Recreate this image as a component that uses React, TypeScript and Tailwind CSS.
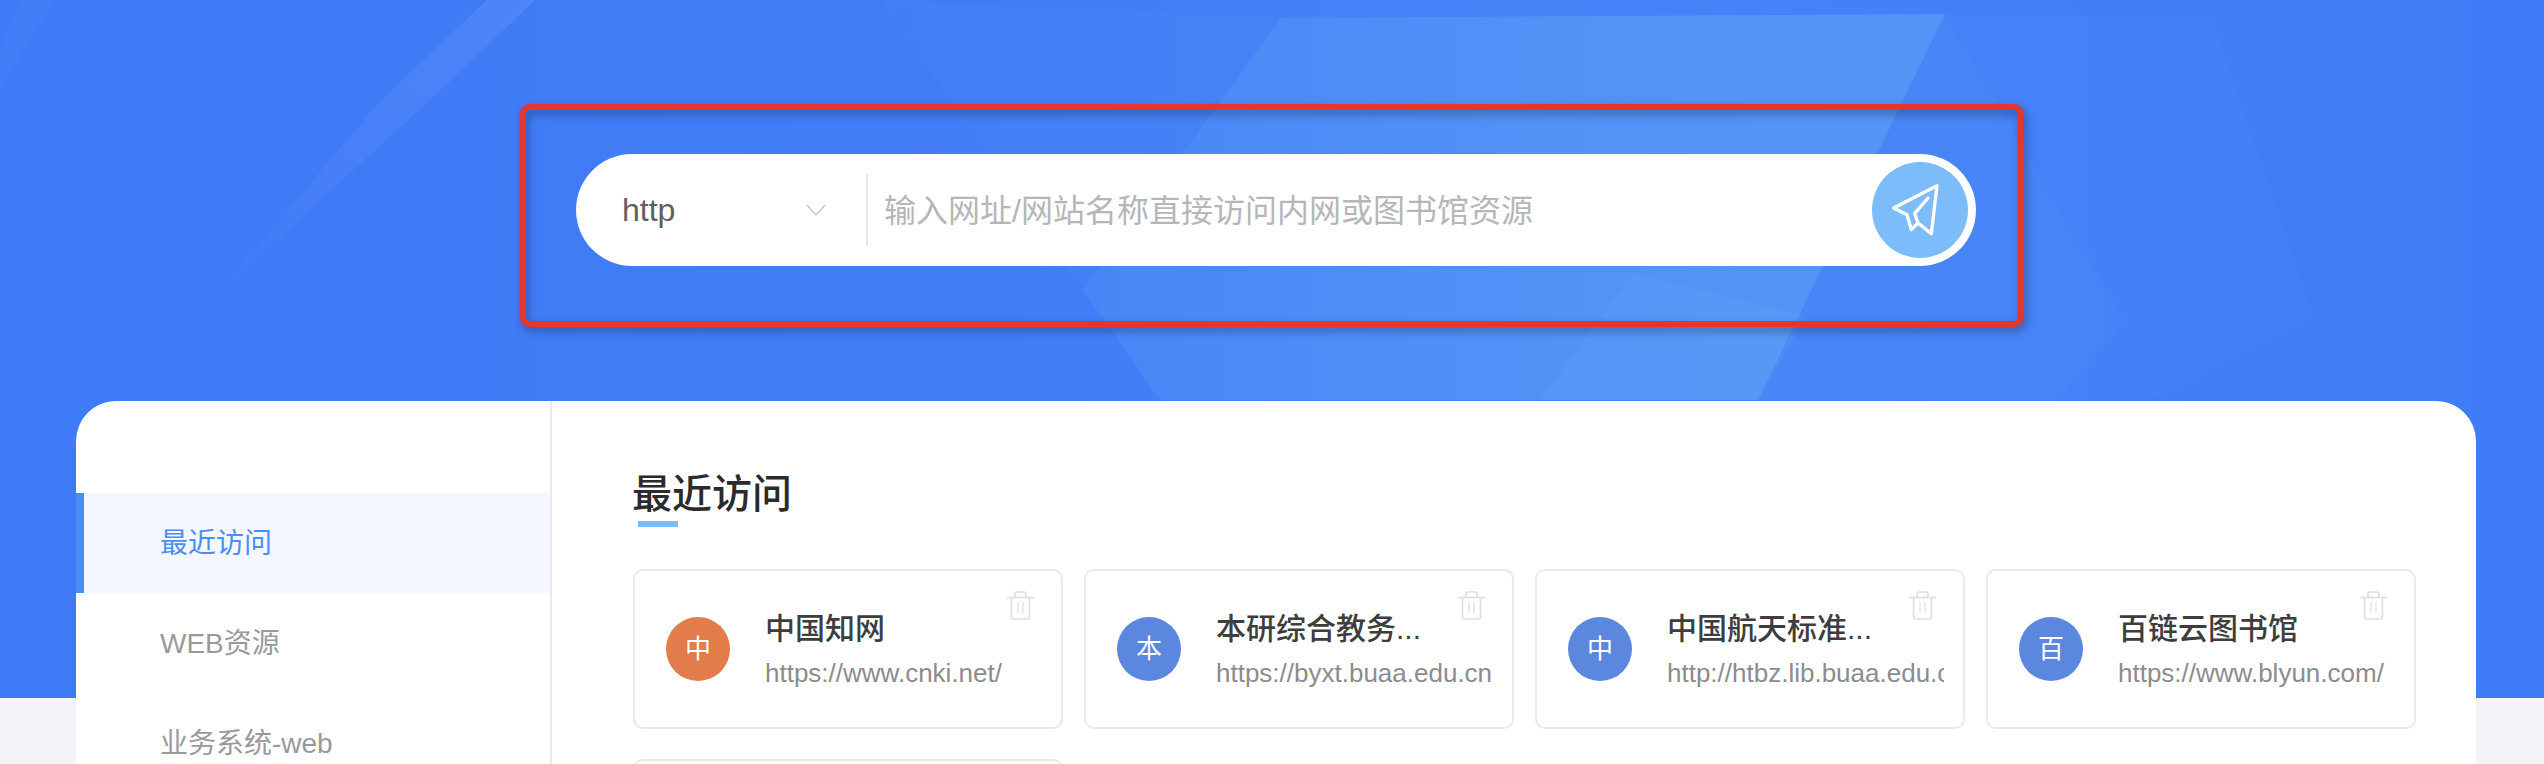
import React from "react";

const font = "font-['Liberation_Sans','Noto_Sans_CJK_SC',sans-serif]";

function BannerArt() {
  return (
    <svg className="absolute inset-0 h-full w-full" viewBox="0 0 2544 698" preserveAspectRatio="none" aria-hidden="true">
      <defs>
        <linearGradient id="base" x1="0" y1="0" x2="1" y2="0">
          <stop offset="0" stopColor="#3f7af7" />
          <stop offset="0.4" stopColor="#427df7" />
          <stop offset="0.6" stopColor="#4783f7" />
          <stop offset="0.85" stopColor="#437ef8" />
          <stop offset="1" stopColor="#407bf7" />
        </linearGradient>
        <linearGradient id="fan" gradientUnits="userSpaceOnUse" x1="1000" y1="0" x2="1800" y2="0">
          <stop offset="0" stopColor="#6cb4f5" stopOpacity="0.12" />
          <stop offset="1" stopColor="#6cb4f5" stopOpacity="0.38" />
        </linearGradient>
        <linearGradient id="streak" gradientUnits="userSpaceOnUse" x1="510" y1="0" x2="211" y2="300">
          <stop offset="0" stopColor="#ffffff" stopOpacity="0.07" />
          <stop offset="1" stopColor="#ffffff" stopOpacity="0.005" />
        </linearGradient>
      </defs>
      <rect width="2544" height="698" fill="url(#base)" />
      <polygon points="20,0 57,0 0,87 0,50" fill="#ffffff" opacity="0.025" />
      <polygon points="487,0 535,0 430,100 211,300 381,100" fill="url(#streak)" />
      <polygon points="880,0 1281,18 1083,290" fill="#6cb4f5" opacity="0.05" />
      <polygon points="1281,18 1945,14 1758,400 1160,400 1083,290" fill="url(#fan)" />
      <polygon points="1633,273 1807,317 1758,400 1540,400" fill="#6cb4f5" opacity="0.14" />
      <polygon points="1945,14 2125,320 2060,400 1758,400" fill="#6cb4f5" opacity="0.1" />
      <polygon points="1945,14 2213,17 2314,320 2150,400 2060,400 2125,320" fill="#6cb4f5" opacity="0.045" />
    </svg>
  );
}

function SendIcon() {
  return (
    <svg viewBox="0 0 288 288" className="h-full w-full" fill="none" stroke="#ffffff" strokeWidth="10" strokeLinejoin="round" strokeLinecap="round">
      <path d="M195 71 L65 138 L105 158 L118 203 L138 183 L178 215 Z" />
      <path d="M168 108 L128 155 L138 183" />
    </svg>
  );
}

function TrashIcon() {
  return (
    <svg viewBox="0 0 27 29" className="h-[29px] w-[27px]" fill="none" stroke="#dedede" strokeWidth="1.6">
      <path d="M0 6.5 H27" />
      <path d="M8 6.5 V3 Q8 1 10 1 H17 Q19 1 19 3 V6.5" />
      <path d="M4.5 6.5 V26 Q4.5 28 6.5 28 H20.5 Q22.5 28 22.5 26 V6.5" />
      <path d="M11 11 V22 M16 11 V22" strokeWidth="1.2" />
    </svg>
  );
}

type Site = { initial: string; name: string; url: string; color: string };

const sites: Site[] = [
  { initial: "中", name: "中国知网", url: "https://www.cnki.net/", color: "bg-[#e27c4b]" },
  { initial: "本", name: "本研综合教务...", url: "https://byxt.buaa.edu.cn", color: "bg-[#5c87df]" },
  { initial: "中", name: "中国航天标准...", url: "http://htbz.lib.buaa.edu.c", color: "bg-[#5c87df]" },
  { initial: "百", name: "百链云图书馆", url: "https://www.blyun.com/", color: "bg-[#5c87df]" },
];

function SiteCard({ site }: { site: Site }) {
  return (
    <div className="relative flex h-[160px] items-center rounded-[10px] border-2 border-[#e9eaec] bg-white pl-[31px]">
      <div className={`flex h-[64px] w-[64px] shrink-0 items-center justify-center rounded-full text-[26px] text-white ${site.color}`}>
        {site.initial}
      </div>
      <div className="ml-[35px] w-[277px] pt-[2px]">
        <div className="whitespace-nowrap text-[30px] leading-[40px] font-medium text-[#3d3d3d]">{site.name}</div>
        <div className="mt-[6px] overflow-hidden text-[26px] leading-[36px] whitespace-nowrap text-[#8c8c8c]">{site.url}</div>
      </div>
      <div className="absolute top-[20px] right-[27px]">
        <TrashIcon />
      </div>
    </div>
  );
}

export default function App() {
  return (
    <div className={`relative h-screen overflow-hidden bg-[#f3f4f8] ${font}`}>
      <div className="absolute inset-x-0 top-0 h-[698px]">
        <BannerArt />
      </div>

      <div className="relative">
        <div className="relative ml-[576px] w-[1400px] pt-[154px]">
          <div className="flex h-[112px] items-center rounded-full bg-white pr-[8px]">
            <div className="flex w-[290px] items-center justify-between pr-[40px] pl-[46px]">
              <span className="text-[32px] text-[#606060]">http</span>
              <svg viewBox="0 0 20 12" className="h-[12px] w-[20px]" fill="none" stroke="#c4c6cc" strokeWidth="1.4">
                <path d="M0.5 0.5 L10 11 L19.5 0.5" />
              </svg>
            </div>
            <div className="h-[72px] w-[2px] bg-[#e8e8e8]" />
            <span className="ml-[16px] flex-1 pt-[2px] text-[32px] text-[#b6b6b6]">输入网址/网站名称直接访问内网或图书馆资源</span>
            <button className="h-[96px] w-[96px] rounded-full bg-[#7dbcfb]">
              <SendIcon />
            </button>
          </div>
          <div className="absolute top-[104px] -left-[56px] h-[223px] w-[1504px] rounded-[10px] border-[6px] border-[#e8352a] drop-shadow-[2px_4px_4px_rgba(0,0,0,0.35)]" />
        </div>

        <div className="mt-[135px] ml-[76px] flex h-[700px] w-[2400px] rounded-[40px] bg-white">
          <nav className="w-[476px] shrink-0 border-r-2 border-[#e9eaec] pt-[92px] text-[28px] text-[#999999]">
            <div className="flex h-[100px] items-center border-l-[8px] border-[#4a8ef5] bg-[#f4f7fe] pt-[2px] pl-[76px] text-[#4a8ef5]">最近访问</div>
            <div className="flex h-[100px] items-center pt-[2px] pl-[84px]">WEB资源</div>
            <div className="flex h-[100px] items-center pt-[2px] pl-[84px]">业务系统-web</div>
          </nav>
          <main className="flex-1 pt-[70px] pl-[81px]">
            <h2 className="-ml-[1px] text-[40px] leading-[46px] font-medium text-[#2b2b2b]">最近访问</h2>
            <div className="mt-[4px] ml-[5px] h-[6px] w-[40px] bg-[#7dbcfb]" />
            <div className="mt-[42px] grid w-[1782px] grid-cols-[repeat(4,430px)] gap-x-[21px] gap-y-[30px]">
              {sites.map((s) => (
                <SiteCard key={s.name} site={s} />
              ))}
              <div className="h-[160px] rounded-[10px] border-2 border-[#e9eaec] bg-white" />
            </div>
          </main>
        </div>
      </div>
    </div>
  );
}
